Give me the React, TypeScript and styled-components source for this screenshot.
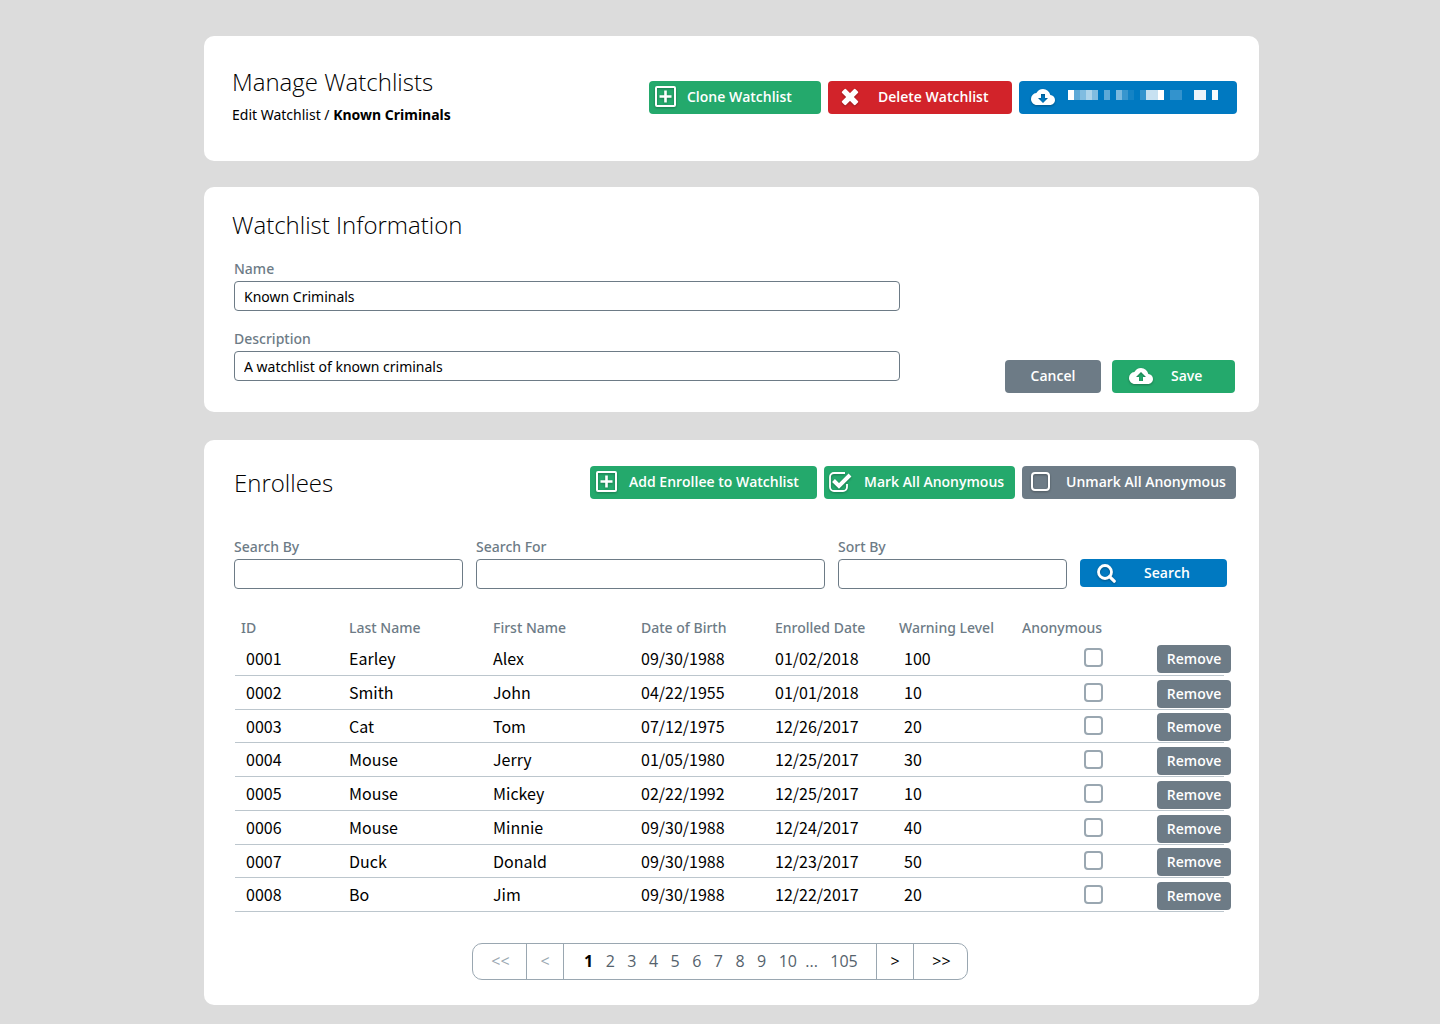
import React, { useState } from "react";
import styled, { createGlobalStyle, css } from "styled-components";

const color = {
  page: "#dcdcdc",
  green: "#24a96c",
  red: "#d2232a",
  blue: "#0079c1",
  slate: "#6d7b86",
  slateLight: "#9aa7b1",
  rule: "#bcc6cd",
};

const GlobalStyle = createGlobalStyle`
  *, *::before, *::after { box-sizing: border-box; }
  body {
    margin: 0;
    background: ${color.page};
    color: #000;
    font-family: "Noto Sans", "Open Sans", sans-serif;
    font-size: 14px;
    line-height: 20px;
  }
  button, input { font: inherit; color: inherit; }
`;

const Page = styled.main`
  display: flex;
  flex-direction: column;
  gap: 26px;
  padding: 36px 181px 19px 204px;
`;

const Card = styled.section`
  background: #fff;
  border-radius: 10px;
`;

const HeaderCard = styled(Card)`
  display: flex;
  justify-content: space-between;
  align-items: flex-start;
  padding: 29px 22px 36px 28px;
`;

const InfoCard = styled(Card)`
  padding: 21px 24px 19px 28px;
`;

const EnrolleeCard = styled(Card)`
  margin-top: 2px;
  padding: 26px 23px 25px 30px;
`;

const Title = styled.h1`
  margin: 0;
  font-family: "Open Sans", "Noto Sans", sans-serif;
  font-size: 24px;
  font-weight: 300;
  line-height: 34px;
`;

const Breadcrumb = styled.nav`
  margin-top: 6px;
`;

const Crumb = styled.a`
  color: inherit;
  text-decoration: none;
`;

const Toolbar = styled.div<{ $top?: number }>`
  display: flex;
  gap: 7px;
  padding-top: ${(p) => p.$top ?? 0}px;
`;

const SectionHead = styled.header`
  display: flex;
  justify-content: space-between;
  align-items: flex-start;
`;

const Button = styled.button<{ $tone: string; $width?: number; $start?: number; $gap?: number; $short?: boolean }>`
  display: flex;
  align-items: center;
  justify-content: ${(p) => (p.$start === undefined ? "center" : "flex-start")};
  gap: ${(p) => p.$gap ?? 0}px;
  width: ${(p) => (p.$width ? `${p.$width}px` : "100%")};
  height: ${(p) => (p.$short ? 28 : 33)}px;
  padding: 0 0 ${(p) => (p.$short ? 0 : 2)}px ${(p) => p.$start ?? 0}px;
  border: 0;
  border-radius: 4px;
  background: ${(p) => p.$tone};
  color: #fff;
  font-family: "Open Sans", "Noto Sans", sans-serif;
  font-weight: 600;
  white-space: nowrap;
  cursor: pointer;
`;

const Glyph = styled.svg`
  display: block;
  flex: none;
  overflow: visible;
  filter: drop-shadow(0 1px 1px rgba(0, 0, 0, 0.3));
`;

const Mosaic = styled.svg`
  display: block;
  flex: none;
  margin-bottom: 3px;
`;

const InfoForm = styled.form`
  display: flex;
  justify-content: space-between;
  align-items: flex-end;
  padding-left: 2px;
  margin-top: 17px;
`;

const InfoFields = styled.div`
  display: flex;
  flex-direction: column;
  gap: 18px;
  width: 66.5%;
  padding-bottom: 12px;
`;

const FormActions = styled.div`
  display: flex;
  gap: 11px;
`;

const Field = styled.label`
  display: flex;
  flex-direction: column;
  gap: 2px;
  min-width: 0;
  color: ${color.slate};
  font-weight: 500;
`;

const TextBox = styled.input`
  width: 100%;
  height: 30px;
  padding: 0 9px;
  border: 1px solid ${color.slate};
  border-radius: 4px;
  background: #fff;
  color: #000;
  font-weight: 400;
`;

const SearchForm = styled.form`
  display: grid;
  grid-template-columns: 229fr 349fr 229fr 147fr;
  gap: 13px;
  align-items: end;
  margin: 37px 9px 0 0;
`;

const SearchAction = styled.div`
  padding-bottom: 2px;
`;

const Table = styled.table`
  width: calc(100% - 13px);
  margin: 26px 0 0 1px;
  border-collapse: collapse;
  table-layout: fixed;
  text-align: left;
`;

const HeadRow = styled.tr`
  height: 26px;
`;

const HeadCell = styled.th<{ $indent?: number }>`
  padding: 0 0 0 ${(p) => p.$indent ?? 0}px;
  color: ${color.slate};
  font-weight: 500;
  white-space: nowrap;
`;

const Row = styled.tr`
  height: 34px;
  border-bottom: 1px solid ${color.rule};
  &:nth-child(4n + 3) {
    height: 33px;
  }
`;

const Cell = styled.td<{ $indent?: number }>`
  padding: 0 0 0 ${(p) => p.$indent ?? 0}px;
  font-family: "Noto Sans CJK SC", "Noto Sans", sans-serif;
  font-size: 16px;
  line-height: 24px;
  white-space: nowrap;
`;

const ActionCell = styled(Cell)`
  padding-top: 3px;
  font-size: 14px;
`;

const Tick = styled.input`
  display: block;
  width: 19px;
  height: 19px;
  margin: 0;
  appearance: none;
  border: 2px solid ${color.slateLight};
  border-radius: 4px;
  background: #fff;
  &:checked {
    background: ${color.slateLight};
  }
`;

const Pager = styled.nav`
  display: flex;
  width: 496px;
  max-width: 100%;
  height: 37px;
  margin: 31px auto 0 238px;
  border: 1px solid ${color.slateLight};
  border-radius: 10px;
  font-family: "Open Sans", "Noto Sans", sans-serif;
  font-size: 16px;
  line-height: 35px;
`;

const pagerText = css`
  padding: 0;
  border: 0;
  background: none;
  cursor: pointer;
`;

const Step = styled.button<{ $wide?: boolean; $side: "left" | "right"; $idle?: boolean }>`
  ${pagerText}
  width: ${(p) => (p.$wide ? 54 : 37)}px;
  padding-left: ${(p) => (p.$wide ? 2 : 0)}px;
  ${(p) => (p.$side === "left" ? "border-right" : "border-left")}: 1px solid ${color.slateLight};
  color: ${(p) => (p.$idle ? color.slateLight : "#000")};
`;

const Pages = styled.div`
  flex: 1;
  padding-left: 20px;
  white-space: pre;
  color: #55626c;
`;

const PageLink = styled.button<{ $current?: boolean }>`
  ${pagerText}
  color: ${(p) => (p.$current ? "#000" : "inherit")};
  font-weight: ${(p) => (p.$current ? 700 : 400)};
`;

const PlusBox = () => (
  <Glyph width="21" height="21" viewBox="0 0 21 21" fill="none" stroke="#fff" aria-hidden="true">
    <rect x="1" y="1" width="19" height="19" rx="1" strokeWidth="2" />
    <path d="M10.5 4.5v12M4.5 10.5h12" strokeWidth="2.6" />
  </Glyph>
);

const Cross = () => (
  <Glyph width="16" height="16" viewBox="0 0 16 16" fill="#fff" aria-hidden="true">
    <rect x="-1.5" y="5.2" width="19" height="5.6" rx="1.2" transform="rotate(45 8 8)" />
    <rect x="-1.5" y="5.2" width="19" height="5.6" rx="1.2" transform="rotate(-45 8 8)" />
  </Glyph>
);

const Cloud = ({ up }: { up?: boolean }) => (
  <Glyph width="24" height="16" viewBox="0 4 24 16" aria-hidden="true">
    <path
      d={
        "M19.35 10.04A7.49 7.49 0 0 0 12 4C9.11 4 6.6 5.64 5.35 8.04A5.994 5.994 0 0 0 0 14c0 3.31 2.69 6 6 6h13c2.76 0 5-2.24 5-5 0-2.64-2.05-4.78-4.65-4.96z" +
        (up ? "M14 13v4h-4v-4H7l5-5 5 5h-3z" : "M17 13l-5 5-5-5h3V9h4v4h3z")
      }
      fill="#fff"
      fillRule="evenodd"
    />
  </Glyph>
);

const CheckedBox = () => (
  <Glyph width="23" height="20" viewBox="0 0 23 20" fill="none" stroke="#fff" aria-hidden="true">
    <path d="M16 1H5a4 4 0 0 0-4 4v10a4 4 0 0 0 4 4h9a4 4 0 0 0 4-4v-3" strokeWidth="1.8" />
    <path d="M4.5 8.5l5.5 5.5L21 3" strokeWidth="4" />
  </Glyph>
);

const EmptyBox = () => (
  <Glyph width="19" height="19" viewBox="0 0 19 19" fill="none" stroke="#fff" aria-hidden="true">
    <rect x="1" y="1" width="17" height="17" rx="3" strokeWidth="2" />
  </Glyph>
);

const Magnifier = () => (
  <Glyph width="19" height="19" viewBox="0 0 19 19" fill="none" stroke="#fff" aria-hidden="true">
    <circle cx="8" cy="8" r="6.5" strokeWidth="2.8" />
    <path d="M12.6 12.6l4.6 4.6" strokeWidth="3.2" strokeLinecap="round" />
  </Glyph>
);

const mosaicTiles: [number, number, number][] = [
  [0, 6, 1],
  [6, 6, 0.36],
  [12, 6, 0.5],
  [18, 6, 0.68],
  [24, 6, 0.5],
  [36, 6, 0.36],
  [48, 6, 0.48],
  [54, 6, 0.22],
  [60, 6, 0.08],
  [72, 6, 0.2],
  [78, 12, 0.78],
  [90, 6, 1],
  [102, 12, 0.2],
  [126, 12, 0.92],
  [144, 6, 0.97],
];

const enrollees = [
  ["0001", "Earley", "Alex", "09/30/1988", "01/02/2018", "100"],
  ["0002", "Smith", "John", "04/22/1955", "01/01/2018", "10"],
  ["0003", "Cat", "Tom", "07/12/1975", "12/26/2017", "20"],
  ["0004", "Mouse", "Jerry", "01/05/1980", "12/25/2017", "30"],
  ["0005", "Mouse", "Mickey", "02/22/1992", "12/25/2017", "10"],
  ["0006", "Mouse", "Minnie", "09/30/1988", "12/24/2017", "40"],
  ["0007", "Duck", "Donald", "09/30/1988", "12/23/2017", "50"],
  ["0008", "Bo", "Jim", "09/30/1988", "12/22/2017", "20"],
];

const columnWidths = [114, 144, 148, 134, 124, 123, 135, 67];
const pages = ["1", "2", "3", "4", "5", "6", "7", "8", "9", "10"];

export default function App() {
  const [name, setName] = useState("Known Criminals");
  const [description, setDescription] = useState("A watchlist of known criminals");

  return (
    <>
      <GlobalStyle />
      <Page>
        <HeaderCard>
          <div>
            <Title>Manage Watchlists</Title>
            <Breadcrumb>
              <Crumb href="#edit">Edit Watchlist</Crumb> / <b>Known Criminals</b>
            </Breadcrumb>
          </div>
          <Toolbar $top={16}>
            <Button type="button" $tone={color.green} $width={172} $start={6} $gap={11}>
              <PlusBox />
              Clone Watchlist
            </Button>
            <Button type="button" $tone={color.red} $width={184} $start={14} $gap={20}>
              <Cross />
              Delete Watchlist
            </Button>
            <Button type="button" aria-label="Download" $tone={color.blue} $width={218} $start={12} $gap={13}>
              <Cloud />
              <Mosaic width="150" height="10" shapeRendering="crispEdges" aria-hidden="true">
                {mosaicTiles.map(([x, w, alpha]) => (
                  <rect key={x} x={x} width={w} height="10" fill="#fff" fillOpacity={alpha} />
                ))}
              </Mosaic>
            </Button>
          </Toolbar>
        </HeaderCard>

        <InfoCard>
          <Title as="h2">Watchlist Information</Title>
          <InfoForm onSubmit={(e) => e.preventDefault()}>
            <InfoFields>
              <Field>
                Name
                <TextBox value={name} onChange={(e) => setName(e.target.value)} />
              </Field>
              <Field>
                Description
                <TextBox value={description} onChange={(e) => setDescription(e.target.value)} />
              </Field>
            </InfoFields>
            <FormActions>
              <Button type="button" $tone={color.slate} $width={96}>
                Cancel
              </Button>
              <Button type="submit" $tone={color.green} $width={123} $start={17} $gap={18}>
                <Cloud up />
                Save
              </Button>
            </FormActions>
          </InfoForm>
        </InfoCard>

        <EnrolleeCard>
          <SectionHead>
            <Title as="h2">Enrollees</Title>
            <Toolbar>
              <Button type="button" $tone={color.green} $width={227} $start={6} $gap={12}>
                <PlusBox />
                Add Enrollee to Watchlist
              </Button>
              <Button type="button" $tone={color.green} $width={191} $start={5} $gap={12}>
                <CheckedBox />
                Mark All Anonymous
              </Button>
              <Button type="button" $tone={color.slate} $width={214} $start={9} $gap={16}>
                <EmptyBox />
                Unmark All Anonymous
              </Button>
            </Toolbar>
          </SectionHead>

          <SearchForm onSubmit={(e) => e.preventDefault()}>
            <Field>
              Search By
              <TextBox />
            </Field>
            <Field>
              Search For
              <TextBox />
            </Field>
            <Field>
              Sort By
              <TextBox />
            </Field>
            <SearchAction>
              <Button type="submit" $tone={color.blue} $start={17} $gap={28} $short>
                <Magnifier />
                Search
              </Button>
            </SearchAction>
          </SearchForm>

          <Table>
            <colgroup>
              {columnWidths.map((width, i) => (
                <col key={i} style={{ width }} />
              ))}
            </colgroup>
            <thead>
              <HeadRow>
                <HeadCell $indent={6}>ID</HeadCell>
                <HeadCell>Last Name</HeadCell>
                <HeadCell>First Name</HeadCell>
                <HeadCell>Date of Birth</HeadCell>
                <HeadCell>Enrolled Date</HeadCell>
                <HeadCell>Warning Level</HeadCell>
                <HeadCell>Anonymous</HeadCell>
                <HeadCell as="td" />
              </HeadRow>
            </thead>
            <tbody>
              {enrollees.map(([id, last, first, born, enrolled, level]) => (
                <Row key={id}>
                  <Cell $indent={11}>{id}</Cell>
                  <Cell>{last}</Cell>
                  <Cell>{first}</Cell>
                  <Cell>{born}</Cell>
                  <Cell>{enrolled}</Cell>
                  <Cell $indent={5}>{level}</Cell>
                  <Cell $indent={62}>
                    <Tick type="checkbox" aria-label={`Anonymous ${id}`} />
                  </Cell>
                  <ActionCell>
                    <Button type="button" $tone={color.slate} $width={74} $short>
                      Remove
                    </Button>
                  </ActionCell>
                </Row>
              ))}
            </tbody>
          </Table>

          <Pager aria-label="Pages">
            <Step type="button" $side="left" $wide $idle>{"<<"}</Step>
            <Step type="button" $side="left" $idle>{"<"}</Step>
            <Pages>
              {pages.map((page, i) => (
                <React.Fragment key={page}>
                  {i > 0 && "   "}
                  <PageLink type="button" $current={page === "1"}>{page}</PageLink>
                </React.Fragment>
              ))}
              {"  ...   "}
              <PageLink type="button">105</PageLink>
            </Pages>
            <Step type="button" $side="right">{">"}</Step>
            <Step type="button" $side="right" $wide>{">>"}</Step>
          </Pager>
        </EnrolleeCard>
      </Page>
    </>
  );
}
